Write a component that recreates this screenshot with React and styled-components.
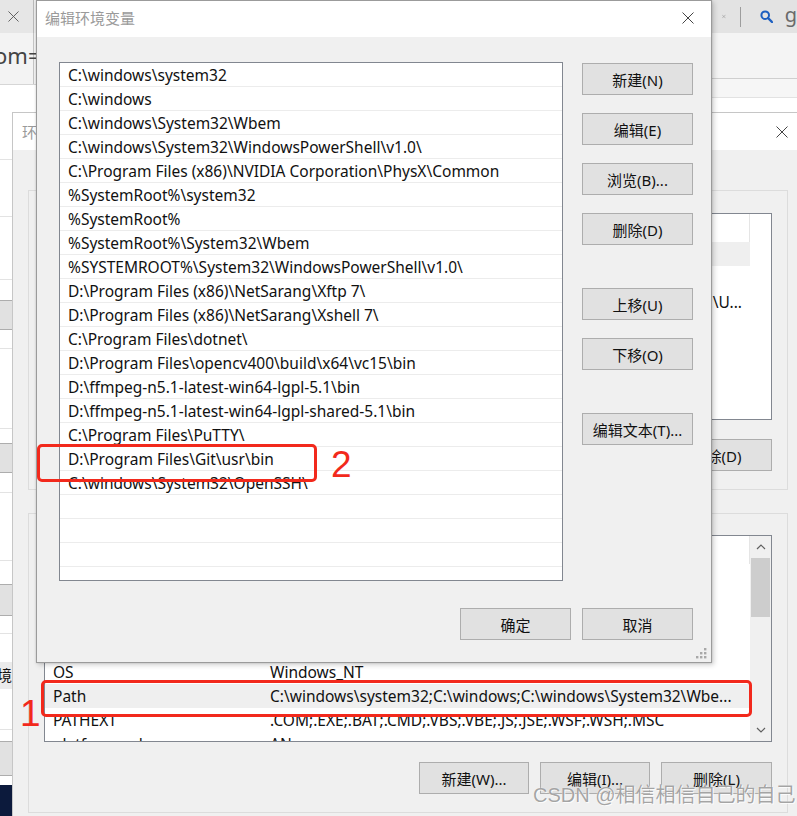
import React from "react";
import styled, { createGlobalStyle } from "styled-components";

const FONT = `"Noto Sans", "Noto Sans CJK SC", sans-serif`;
const RED = "#f2291c";

const PATH_ENTRIES = [
  "C:\\windows\\system32",
  "C:\\windows",
  "C:\\windows\\System32\\Wbem",
  "C:\\windows\\System32\\WindowsPowerShell\\v1.0\\",
  "C:\\Program Files (x86)\\NVIDIA Corporation\\PhysX\\Common",
  "%SystemRoot%\\system32",
  "%SystemRoot%",
  "%SystemRoot%\\System32\\Wbem",
  "%SYSTEMROOT%\\System32\\WindowsPowerShell\\v1.0\\",
  "D:\\Program Files (x86)\\NetSarang\\Xftp 7\\",
  "D:\\Program Files (x86)\\NetSarang\\Xshell 7\\",
  "C:\\Program Files\\dotnet\\",
  "D:\\Program Files\\opencv400\\build\\x64\\vc15\\bin",
  "D:\\ffmpeg-n5.1-latest-win64-lgpl-5.1\\bin",
  "D:\\ffmpeg-n5.1-latest-win64-lgpl-shared-5.1\\bin",
  "C:\\Program Files\\PuTTY\\",
  "D:\\Program Files\\Git\\usr\\bin",
  "C:\\windows\\System32\\OpenSSH\\",
  "",
  "",
  "",
  "",
];

// only the part of the back window that shows past the dialog carries text
const USER_VARS = [
  { id: "u1", selected: true },
  { id: "u2" },
  { id: "u3", value: ";C:\\U...", pinEnd: true },
  { id: "u4" },
  { id: "u5" },
];

const SYSTEM_VARS = [
  { id: "s1" },
  { id: "s2" },
  { id: "s3" },
  { id: "s4" },
  { id: "s5", name: "OS", value: "Windows_NT" },
  {
    id: "s6",
    name: "Path",
    value: "C:\\windows\\system32;C:\\windows;C:\\windows\\System32\\Wbe...",
    selected: true,
  },
  { id: "s7", name: "PATHEXT", value: ".COM;.EXE;.BAT;.CMD;.VBS;.VBE;.JS;.JSE;.WSF;.WSH;.MSC" },
  { id: "s8", name: "platformcode", value: "AN" },
];

// the strip of the app window peeking out on the far left
const SIDE_SEGMENTS = [
  { h: 75, line: true },
  { h: 57, line: true },
  { h: 63, line: true },
  { h: 20 },
  { h: 30, kind: "button" },
  { h: 19, line: true },
  { h: 80, line: true },
  { h: 14 },
  { h: 30, kind: "button" },
  { h: 20, line: true },
  { h: 68, line: true },
  { h: 23 },
  { h: 32, kind: "button" },
  { h: 18, line: true },
  { h: 28 },
  { h: 27, kind: "band", text: "境" },
  { h: 41, line: true },
  { h: 11 },
  { h: 35, kind: "button" },
  { h: 9 },
  { h: 31, kind: "navy" },
];

const GlobalStyle = createGlobalStyle`
  html, body {
    margin: 0;
    padding: 0;
    background: #fff;
  }
  body {
    font-family: ${FONT};
    font-size: 15px;
    color: #111;
    overflow: hidden;
  }
`;

const Desktop = styled.div`
  position: relative;
  width: 797px;
  height: 816px;
  overflow: hidden;
  background: #fff;
`;

/* ---------- background apps ---------- */

const SideApp = styled.div`
  position: absolute;
  left: 0;
  top: 0;
  width: 36px;
  height: 816px;
  display: flex;
  flex-direction: column;
  overflow: hidden;
  background: #fff;
`;

const SideTab = styled.div`
  height: 33px;
  flex-shrink: 0;
  display: flex;
  align-items: center;
  padding-left: 8px;
  background: linear-gradient(to right, #e6e6e6 33px, #b9b9b9 33px, #b9b9b9 34px, #ededed 34px);
`;

const SideAddr = styled.div`
  height: 52px;
  flex-shrink: 0;
  box-sizing: border-box;
  border-bottom: 1px solid #d6d6d6;
  background: linear-gradient(to right, #f3f3f3 33px, #c4c4c4 33px, #c4c4c4 34px, #f3f3f3 34px);
  font-size: 22px;
  line-height: 44px;
  color: #444;
  text-indent: -6px;
  white-space: nowrap;
`;

const SideSegment = styled.div`
  height: ${(p) => p.$h}px;
  flex-shrink: 0;
  box-sizing: border-box;
  border-bottom: ${(p) => (p.$line ? "1px solid #e3e3e3" : "none")};
  background: ${(p) =>
    p.$kind === "navy" ? "#0c1a3c" : p.$kind === "band" ? "#ebebeb" : p.$kind === "button" ? "#e1e1e1" : "#fff"};
  border-top: ${(p) => (p.$kind === "button" ? "1px solid #adadad" : "none")};
  ${(p) => p.$kind === "button" && "border-bottom: 1px solid #adadad;"}
  font-size: 15px;
  line-height: ${(p) => p.$h}px;
  text-indent: -3px;
  color: #111;
  white-space: nowrap;
`;

const BrowserCorner = styled.div`
  position: absolute;
  left: 712px;
  top: 0;
  width: 85px;
  height: 112px;
  display: flex;
  flex-direction: column;
  background: #fff;
`;

const BrowserTabs = styled.div`
  height: 33px;
  flex-shrink: 0;
  display: flex;
  align-items: center;
  padding-left: 10px;
  background: #e3e3e3;
  overflow: hidden;
`;

const TabDivider = styled.span`
  width: 1px;
  height: 20px;
  flex-shrink: 0;
  margin: 0 19px 0 14px;
  background: #9d9d9d;
`;

const BrowserLetter = styled.span`
  margin-left: 12px;
  font-size: 20px;
  color: #6a6a6a;
  line-height: 1;
  padding-bottom: 4px;
`;

const BrowserBand = styled.div`
  height: ${(p) => p.$h}px;
  flex-shrink: 0;
  box-sizing: border-box;
  background: ${(p) => p.$bg};
  border-bottom: 1px solid ${(p) => p.$line};
`;

/* ---------- windows ---------- */

const Window = styled.div`
  position: absolute;
  left: ${(p) => p.$left}px;
  top: ${(p) => p.$top}px;
  width: ${(p) => p.$width}px;
  height: ${(p) => p.$height}px;
  box-sizing: border-box;
  display: flex;
  flex-direction: column;
  background: #f0f0f0;
`;

const BackWindow = styled(Window)`
  border: 1px solid #c6c6c6;
  overflow: hidden;
`;

const EditDialog = styled(Window)`
  border: 1px solid #9b9b9b;
  box-shadow: 2px 2px 5px rgba(0, 0, 0, 0.18), 0 0 2px rgba(0, 0, 0, 0.15);
`;

const TitleBar = styled.div`
  height: ${(p) => p.$h}px;
  flex-shrink: 0;
  box-sizing: border-box;
  display: flex;
  align-items: center;
  justify-content: space-between;
  padding-left: ${(p) => p.$pad}px;
  padding-bottom: ${(p) => p.$lift || 0}px;
  background: #fff;
  color: #9a9a9a;
  font-size: 15px;
`;

const CloseBox = styled.div`
  width: 46px;
  height: 100%;
  display: flex;
  align-items: center;
  justify-content: center;
`;

const BackBody = styled.div`
  display: flex;
  flex-direction: column;
  gap: 23px;
  padding: 40px 0 0 15px;
`;

const GroupBox = styled.div`
  width: 760px;
  height: 300px;
  box-sizing: border-box;
  border: 1px solid #dcdcdc;
  padding: ${(p) => p.$padTop}px 15px 0;
`;

const ListView = styled.div`
  height: 207px;
  box-sizing: border-box;
  border: 1px solid #828790;
  background: #fff;
  display: flex;
  overflow: hidden;
`;

const ListColumns = styled.div`
  flex: 1;
  display: flex;
  flex-direction: column;
  overflow: hidden;
`;

const ListHeader = styled.div`
  height: 28px;
  flex-shrink: 0;
  display: grid;
  grid-template-columns: 217px 488px;
  background: #fff;
`;

const HeaderCell = styled.div`
  border-right: 1px solid #e5e5e5;
`;

const VarRow = styled.div`
  height: 24px;
  flex-shrink: 0;
  display: grid;
  grid-template-columns: 217px 488px;
  width: 705px;
  background: ${(p) => (p.$selected ? "#efefef" : "transparent")};
`;

const VarCell = styled.div`
  display: flex;
  justify-content: ${(p) => (p.$pinEnd ? "flex-end" : "flex-start")};
  padding: 0 8px;
  font-size: 15.5px;
  line-height: 24px;
  white-space: nowrap;
  overflow: hidden;
  color: #111;
`;

const ScrollTrack = styled.div`
  width: 21px;
  flex-shrink: 0;
  display: flex;
  flex-direction: column;
  background: #f0f0f0;
`;

const ScrollArrow = styled.div`
  height: 22px;
  flex-shrink: 0;
  display: flex;
  align-items: center;
  justify-content: center;
  margin-top: ${(p) => (p.$down ? "auto" : "0")};
`;

const ScrollThumb = styled.div`
  height: 59px;
  margin: 0 1px;
  background: #cdcdcd;
`;

const ButtonRow = styled.div`
  display: flex;
  justify-content: flex-end;
  gap: 11px;
  margin-top: ${(p) => p.$gap}px;
`;

const Btn = styled.button`
  width: ${(p) => p.$w || 111}px;
  height: 32px;
  margin-top: ${(p) => p.$mt || 0}px;
  box-sizing: border-box;
  border: 1px solid #adadad;
  background: #e1e1e1;
  padding: 0;
  font-family: ${FONT};
  font-size: 15px;
  color: #111;
  white-space: nowrap;
  flex-shrink: 0;
`;

const DialogBody = styled.div`
  flex: 1;
  display: grid;
  grid-template-columns: 504px 111px;
  grid-template-rows: 519px 32px;
  column-gap: 19px;
  row-gap: 27px;
  padding: 25px 0 0 22px;
`;

const PathList = styled.div`
  box-sizing: border-box;
  border: 1px solid #828790;
  background: #fff;
  overflow: hidden;
`;

const PathRow = styled.div`
  height: 24px;
  box-sizing: border-box;
  border-bottom: 1px solid #ececec;
  padding-left: 8px;
  font-size: 15.5px;
  line-height: 25px;
  white-space: nowrap;
  color: #111;
`;

const SideButtons = styled.div`
  display: flex;
  flex-direction: column;
`;

const DialogFooter = styled.div`
  grid-column: 1 / -1;
  justify-self: end;
  display: flex;
  gap: 11px;
`;

const Grip = styled.svg`
  position: absolute;
  right: 4px;
  bottom: 3px;
`;

/* ---------- annotations ---------- */

const RedBox = styled.div`
  position: absolute;
  left: ${(p) => p.$left}px;
  top: ${(p) => p.$top}px;
  width: ${(p) => p.$w}px;
  height: ${(p) => p.$h}px;
  box-sizing: border-box;
  border: 3px solid ${RED};
  border-radius: 5px;
`;

const RedNumber = styled.div`
  position: absolute;
  left: ${(p) => p.$left}px;
  top: ${(p) => p.$top}px;
  font-family: "Liberation Sans", sans-serif;
  font-size: 37px;
  line-height: 37px;
  color: ${RED};
`;

const Watermark = styled.div`
  position: absolute;
  left: 533px;
  top: 782px;
  font-family: "Liberation Sans", "Noto Sans CJK SC", sans-serif;
  font-size: 20px;
  line-height: 26px;
  color: rgba(135, 135, 135, 0.75);
  text-shadow: 0 0 1px #fff, 1px 1px 0 rgba(255, 255, 255, 0.8);
  white-space: nowrap;
`;

function CloseIcon({ size = 12, color = "#444" }) {
  return (
    <svg width={size} height={size} viewBox="0 0 12 12">
      <path d="M0.5 0.5 L11.5 11.5 M11.5 0.5 L0.5 11.5" stroke={color} strokeWidth="1" />
    </svg>
  );
}

function SearchIcon() {
  return (
    <svg width="13" height="13" viewBox="0 0 13 13" style={{ flexShrink: 0 }}>
      <circle cx="5.2" cy="5.2" r="3.8" fill="none" stroke="#1d5fc0" strokeWidth="2" />
      <path d="M8 8 L12 12" stroke="#1d5fc0" strokeWidth="2.4" strokeLinecap="round" />
    </svg>
  );
}

function Chevron({ down }) {
  return (
    <svg width="10" height="6" viewBox="0 0 10 6">
      <polyline
        points={down ? "1,1 5,5 9,1" : "1,5 5,1 9,5"}
        fill="none"
        stroke="#606060"
        strokeWidth="1.2"
      />
    </svg>
  );
}

function VarList({ rows, scroll }) {
  return (
    <ListView>
      <ListColumns>
        <ListHeader>
          <HeaderCell />
          <HeaderCell />
        </ListHeader>
        {rows.map((r) => (
          <VarRow key={r.id} $selected={r.selected}>
            <VarCell>{r.name}</VarCell>
            <VarCell $pinEnd={r.pinEnd}>{r.value}</VarCell>
          </VarRow>
        ))}
      </ListColumns>
      {scroll && (
        <ScrollTrack>
          <ScrollArrow>
            <Chevron />
          </ScrollArrow>
          <ScrollThumb />
          <ScrollArrow $down>
            <Chevron down />
          </ScrollArrow>
        </ScrollTrack>
      )}
    </ListView>
  );
}

export default function App() {
  return (
    <>
      <GlobalStyle />
      <Desktop>
        <SideApp>
          <SideTab>
            <CloseIcon size={11} color="#555" />
          </SideTab>
          <SideAddr>om=</SideAddr>
          {SIDE_SEGMENTS.map((s, i) => (
            <SideSegment key={i} $h={s.h} $line={s.line} $kind={s.kind}>
              {s.text}
            </SideSegment>
          ))}
        </SideApp>

        <BrowserCorner>
          <BrowserTabs>
            <CloseIcon size={11} color="#555" />
            <TabDivider />
            <SearchIcon />
            <BrowserLetter>g</BrowserLetter>
          </BrowserTabs>
          <BrowserBand $h={46} $bg="#f4f4f4" $line="#cfcfcf" />
          <BrowserBand $h={19} $bg="#f6f6f6" $line="#e2e2e2" />
        </BrowserCorner>

        <BackWindow $left={12} $top={112} $width={794} $height={710}>
          <TitleBar $h={37} $pad={9}>
            环境变量
            <CloseBox>
              <CloseIcon />
            </CloseBox>
          </TitleBar>
          <BackBody>
            <GroupBox $padTop={22}>
              <VarList rows={USER_VARS} />
              <ButtonRow $gap={19}>
                <Btn $w={110} aria-label="新建" />
                <Btn $w={110} aria-label="编辑" />
                <Btn $w={111}>删除(D)</Btn>
              </ButtonRow>
            </GroupBox>
            <GroupBox $padTop={21}>
              <VarList rows={SYSTEM_VARS} scroll />
              <ButtonRow $gap={20}>
                <Btn $w={110}>新建(W)...</Btn>
                <Btn $w={110}>编辑(I)...</Btn>
                <Btn $w={111}>删除(L)</Btn>
              </ButtonRow>
            </GroupBox>
          </BackBody>
        </BackWindow>

        <EditDialog $left={36} $top={0} $width={676} $height={663}>
          <TitleBar $h={36} $pad={8} $lift={3}>
            编辑环境变量
            <CloseBox>
              <CloseIcon />
            </CloseBox>
          </TitleBar>
          <DialogBody>
            <PathList>
              {PATH_ENTRIES.map((p, i) => (
                <PathRow key={i}>{p}</PathRow>
              ))}
            </PathList>
            <SideButtons>
              <Btn $mt={1}>新建(N)</Btn>
              <Btn $mt={18}>编辑(E)</Btn>
              <Btn $mt={18}>浏览(B)...</Btn>
              <Btn $mt={18}>删除(D)</Btn>
              <Btn $mt={43}>上移(U)</Btn>
              <Btn $mt={18}>下移(O)</Btn>
              <Btn $mt={43}>编辑文本(T)...</Btn>
            </SideButtons>
            <DialogFooter>
              <Btn>确定</Btn>
              <Btn>取消</Btn>
            </DialogFooter>
          </DialogBody>
          <Grip width="11" height="11" viewBox="0 0 11 11">
            {[
              [8, 0],
              [8, 4],
              [4, 4],
              [8, 8],
              [4, 8],
              [0, 8],
            ].map(([x, y]) => (
              <rect key={`${x}-${y}`} x={x} y={y} width="2.4" height="2.4" fill="#a8a8a8" />
            ))}
          </Grip>
        </EditDialog>

        <RedBox $left={37} $top={444} $w={280} $h={38} />
        <RedNumber $left={331} $top={446}>
          2
        </RedNumber>
        <RedBox $left={41} $top={680} $w={711} $h={37} />
        <RedNumber $left={20} $top={695}>
          1
        </RedNumber>

        <Watermark>CSDN @相信相信自己的自己</Watermark>
      </Desktop>
    </>
  );
}
